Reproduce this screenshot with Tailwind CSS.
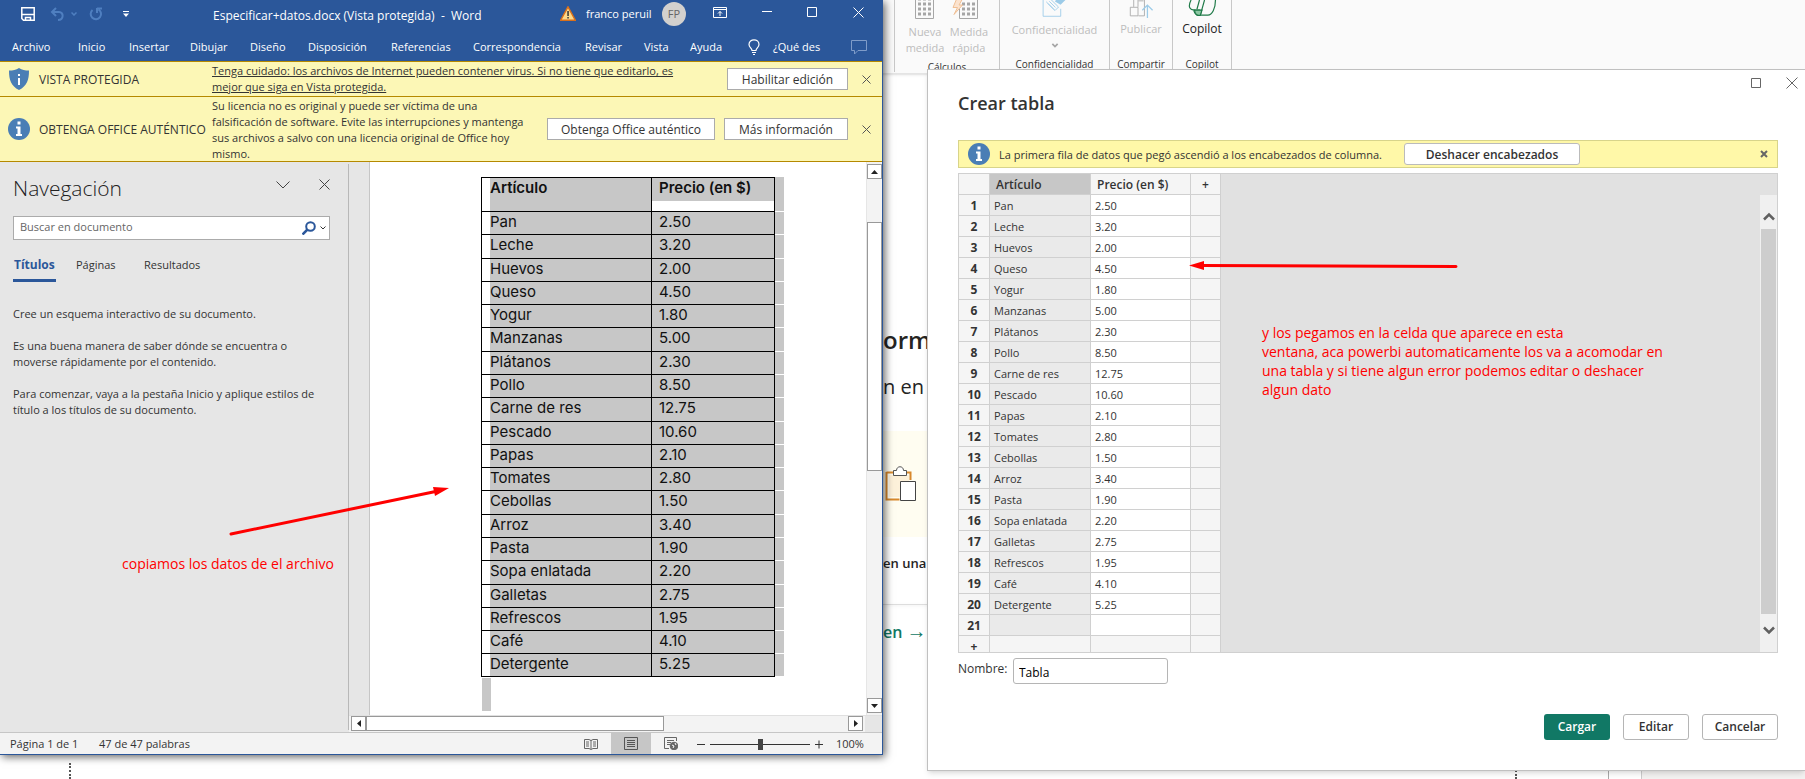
<!DOCTYPE html>
<html lang="es">
<head>
<meta charset="utf-8">
<title>Crear tabla</title>
<script src="https://cdn.jsdelivr.net/npm/@tailwindcss/browser@4"></script>
</head>
<body class="relative h-screen overflow-hidden bg-white font-['Open_Sans','Noto_Sans',sans-serif] text-[11px] leading-4 text-[#333]">

<!-- Power BI, behind both windows -->
<div class="flex h-full flex-col">
  <header class="flex h-[74px] shrink-0 border-b border-[#e4e4e4] bg-[#fafafa] pl-[894px] shadow-sm">
    <div class="grid h-[72px] w-[106px] grid-cols-2 content-start justify-items-center border-l border-r border-[#c8c8c8] px-[8px] text-center text-[#bdbdbd]">
      <svg class="h-[19px] w-5" viewBox="0 0 20 19" fill="none" stroke="#a6a6a6"><path d="M.5 0v18.500h18V0"/><path d="M3 -1h13M3 4h13M3 9h13M3 14h13" stroke-width="3" stroke-dasharray="3 2"/></svg>
      <svg class="mr-2 h-[19px] w-7" viewBox="0 0 28 19" fill="none" stroke="#a6a6a6"><path d="M8.500 9v9.500h18V0"/><path d="M11 4h13M11 9h13M11 14h13" stroke-width="3" stroke-dasharray="3 2"/><path d="M6 -2 2 7.500h4.500L3 14.500l8.500-9.500H8l4-7z" fill="#fbe3cf" stroke="#f0bf94"/></svg>
      <span class="mt-[5px]">Nueva<br>medida</span><span class="mt-[5px]">Medida<br>rápida</span>
      <span class="col-span-2 mt-[3px] text-[10px] text-[#333]">Cálculos</span>
    </div>
    <div class="flex h-[72px] w-[110px] flex-col items-center border-r border-[#c8c8c8] text-[#bdbdbd]">
      <svg class="h-[19px] w-7" viewBox="0 0 28 19" fill="none" stroke="#9ccbe8"><path d="M.5 0v18.500h20V10"/><path d="m4 2 10 10 4-4L8-2M7.500 1.500l7 7M6 4l7 7"/><path d="m15 0 5 3 6-6" stroke-width="4"/></svg>
      <span class="mt-[5px]">Confidencialidad</span>
      <svg class="mt-[5px] h-[6px] w-2" viewBox="0 0 8 6" fill="none" stroke="#a6a6a6" stroke-width="2"><path d="m1 1 3 3 3-3"/></svg>
      <span class="mt-[8px] text-[10px] text-[#333]">Confidencialidad</span>
    </div>
    <div class="flex h-[72px] w-[63px] flex-col items-center border-r border-[#c8c8c8] text-[#bdbdbd]">
      <svg class="h-[21px] w-7" viewBox="0 0 28 21" fill="none" stroke="#a6a6a6"><path d="M1.500 8.500h9v10h-9zM5.500 8V0m5 8V0M11 18.500h7V0M11 1h6"/><path d="M21.500 21V6m-6 6 6-6 6 6" stroke="#9ccbe8" stroke-width="1.500"/></svg>
      <span class="mt-[3px]">Publicar</span>
      <span class="mt-[19px] text-[10px] text-[#333]">Compartir</span>
    </div>
    <div class="flex h-[72px] w-[59px] flex-col items-center border-r border-[#c8c8c8] text-[12px] text-[#222]">
      <svg class="h-[19px] w-8" viewBox="0 0 32 19" fill="none" stroke="#1f7a48" stroke-width="1.400"><path d="M3 0C-1 8 1 12 8 12h4M19 0l-5 18c-3 1-6 0-8-6h8"/><path d="M7 12h9l-2 6c-4 1-6-1-7-6z" fill="#8cc7a3"/><path d="M14 18h9c5 0 9-8 9-18M13 0l-3 11"/></svg>
      <span class="mt-[5px]">Copilot</span>
      <span class="mt-[19px] text-[10px] text-[#333]">Copilot</span>
    </div>
  </header>
  <main class="flex flex-1 flex-col pl-[883px] text-[#252423]">
    <p class="mt-[250px] text-[24px] leading-8 font-semibold">orm</p>
    <p class="mt-[15px] text-[20px] leading-8">n en</p>
    <div class="mt-[28px] flex h-[106px] w-[120px] items-center bg-[#fffdf1] pl-[2px]">
      <svg class="h-9 w-8" viewBox="0 0 32 36" fill="none"><path d="M1.500 6.500h7m13 0h4V14M1.500 6v27.500h13" stroke="#d8882c" stroke-width="2"/><path d="M4 9h20v22H4z" fill="#fdf1da"/><path d="M8.500 9.500v-5h3c0-5 7-5 7 0h3v5z" fill="#fff" stroke="#555"/><path d="M15.500 15.500h15v19h-15z" fill="#fff" stroke="#444"/></svg>
    </div>
    <p class="mt-[16px] text-[13px] leading-5 font-semibold">en una</p>
    <div class="mt-[31px] w-[120px] border-b border-[#ddd] shadow"></div>
    <p class="mt-[14px] text-[16px] leading-6 font-semibold text-[#117865]">en <span class="text-[20px]">→</span></p>
  </main>
  <footer class="flex h-4 shrink-0 pl-[69px]">
    <div class="w-[1446px] border-l-2 border-dotted border-[#555]"></div>
    <div class="w-[93px] border-l-2 border-dotted border-[#555]"></div>
    <div class="w-[33px] border-l border-[#aaa]"></div>
    <div class="flex-1 border-l border-[#ccc] bg-[#f3f2f1]"></div>
  </footer>
</div>

<!-- Power BI dialog -->
<section class="absolute top-[69px] right-0 bottom-[8px] left-[927px] flex flex-col border-t border-b border-l border-[#c0c0c0] bg-white pr-[27px] pl-[30px] shadow-md">
  <div class="mr-[-27px] flex justify-end gap-6 pt-[7px] pr-[7px]">
    <button aria-label="Maximizar"><svg class="h-3 w-3" viewBox="0 0 12 12" fill="none" stroke="#666"><path d="M1.500 1.500h9v9h-9z"/></svg></button>
    <button aria-label="Cerrar"><svg class="h-3 w-3" viewBox="0 0 12 12" fill="none" stroke="#666"><path d="m.5.5 11 11m0-11-11 11"/></svg></button>
  </div>
  <h1 class="mt-[2px] text-[18px] leading-6 font-semibold text-[#333]">Crear tabla</h1>
  <div class="mt-[25px] flex h-7 shrink-0 items-center border border-[#d8d48a] bg-[#fff8a8] pr-[9px] pl-[9px]">
    <svg class="h-[22px] w-[22px]" viewBox="0 0 22 22"><circle cx="11" cy="11" r="11" fill="#4a7eb5"/><path d="M9.500 3.500h3v3h-3zM8 8.500h4.500V16H14v2H8v-2h1.500v-5.500H8z" fill="#fff"/></svg>
    <span class="ml-[9px] w-[405px] pt-[2px] whitespace-nowrap">La primera fila de datos que pegó ascendió a los encabezados de columna.</span>
    <button class="h-[22px] w-[176px] rounded-[3px] border border-[#bbb] bg-white pt-px text-[12px] leading-4 font-semibold text-[#333]">Deshacer encabezados</button>
    <button aria-label="Descartar" class="ml-auto"><svg class="h-2 w-2" viewBox="0 0 8 8" stroke="#666" stroke-width="2"><path d="m1 1 6 6m0-6L1 7"/></svg></button>
  </div>
  <div class="mt-[5px] flex h-[480px] shrink-0 overflow-hidden border border-[#d0d0d0] bg-[#e1e1e1]">
    <table class="h-fit w-[262px] table-fixed border-separate border-spacing-0">
      <colgroup><col class="w-[31px]"><col class="w-[101px]"><col class="w-[100px]"><col class="w-[30px]"></colgroup>
      <thead><tr class="h-[21px]">
        <th class="border-r border-b border-[#d0d0d0] bg-[#f5f5f5] p-0"></th>
        <th class="border-r border-b border-[#d0d0d0] bg-[#c7c7c7] p-0 pt-[2px] pl-[6px] text-left text-[12px] font-semibold">Artículo</th>
        <th class="border-r border-b border-[#d0d0d0] bg-[#f5f5f5] p-0 pt-[2px] pl-[6px] text-left text-[12px] font-semibold">Precio (en $)</th>
        <th class="border-r border-b border-[#d0d0d0] bg-[#f5f5f5] p-0 pt-[2px] text-[12px] font-semibold">+</th>
      </tr></thead>
      <tbody id="grid"></tbody>
    </table>
    <div class="mt-[21px] ml-auto flex w-[17px] flex-col items-center bg-[#f0f0f0]">
      <svg class="mt-[17px] h-[9px] w-3" viewBox="0 0 12 9" fill="none" stroke="#606060" stroke-width="2.500"><path d="m1 7.500 5-5 5 5"/></svg>
      <div class="mt-[8px] w-[15px] flex-1 bg-[#cdcdcd]"></div>
      <svg class="mt-[12px] mb-[17px] h-[9px] w-3" viewBox="0 0 12 9" fill="none" stroke="#606060" stroke-width="2.500"><path d="m1 1.500 5 5 5-5"/></svg>
    </div>
  </div>
  <div class="mt-[5px] flex text-[12px]">
    <label for="nombre" class="mt-[3px] w-[55px]">Nombre:</label>
    <input id="nombre" value="Tabla" class="h-[26px] w-[155px] rounded-[3px] border border-[#b5b5b5] px-[5px] pt-[2px] text-[12px] text-black">
  </div>
  <div class="mt-[30px] flex justify-end gap-[13px] text-[12px] font-semibold text-[#333]">
    <button class="h-[26px] w-[66px] rounded-[3px] bg-[#117865] text-white">Cargar</button>
    <button class="h-[26px] w-[66px] rounded-[3px] border border-[#b5b5b5] bg-white">Editar</button>
    <button class="h-[26px] w-[76px] rounded-[3px] border border-[#b5b5b5] bg-white">Cancelar</button>
  </div>
</section>

<!-- Word window -->
<section class="absolute top-0 bottom-6 left-0 flex w-[883px] flex-col border-r border-b border-[#2b579a] bg-[#e6e6e6] shadow-[2px_2px_8px_rgba(0,0,0,0.6)]">
  <header class="h-[61px] shrink-0 bg-[#2b579a] text-white">
    <div class="flex h-8 items-start">
      <div class="flex w-[213px] items-center pt-[7px] pl-[21px]">
        <button aria-label="Guardar"><svg class="h-[14px] w-[14px]" viewBox="0 0 14 14" fill="none" stroke="#fff" stroke-width="1.500"><path d="M.8.800h12.400v12.400H2.500L.8 11.500zM.8 7.500h12.400M4.500 13.500v-3h5v3"/></svg></button>
        <button aria-label="Deshacer" class="ml-[15px]"><svg class="h-[14px] w-[14px]" viewBox="0 0 14 14" fill="none" stroke="#4f7fc0" stroke-width="2"><path d="M6 1 2 5l4 4M2 5h7c5 0 5 8-1 8"/></svg></button>
        <svg class="ml-[7px] h-1 w-[6px]" viewBox="0 0 6 4" fill="none" stroke="#4f7fc0" stroke-width="1.500"><path d="m.5.500 2.500 2.500L5.500.500"/></svg>
        <button aria-label="Rehacer" class="ml-[12px]"><svg class="h-[14px] w-[14px]" viewBox="0 0 14 14" fill="none" stroke="#4f7fc0" stroke-width="2"><path d="M3.500 3a5.200 5.200 0 1 0 6 -.5M8 1v5M8 1.500h5"/></svg></button>
        <button aria-label="Personalizar" class="ml-[20px]"><svg class="h-[6px] w-[6px]" viewBox="0 0 6 6" fill="#fff"><path d="M0 0h6v1H0zM0 2.500h6L3 6z"/></svg></button>
      </div>
      <span class="w-[347px] pt-[8px] text-[12px] whitespace-pre">Especificar+datos.docx (Vista protegida)  -  Word</span>
      <svg class="mt-[6px] h-[15px] w-4" viewBox="0 0 16 15"><path d="M8 .8 15.300 14.200H.7z" fill="#fcd98a" stroke="#d9701b" stroke-width="1.400"/><path d="M7.300 5h1.500v5H7.300zM7.300 11h1.500v1.500H7.300z" fill="#333"/></svg>
      <span class="ml-[10px] w-[76px] pt-[6px] whitespace-nowrap">franco peruil</span>
      <span class="mt-[2px] flex h-6 w-6 items-center justify-center rounded-full bg-[#d2d0ce] text-[#666]">FP</span>
      <div class="ml-auto flex items-center gap-[35px] pt-[6px] pr-[18px]">
        <button aria-label="Opciones de la cinta"><svg class="h-[11px] w-[14px]" viewBox="0 0 14 11" fill="none" stroke="#fff"><path d="M.5.500h13v10H.5zM.5 2.500h13M7 9V4.500m-2 2 2-2 2 2"/></svg></button>
        <button aria-label="Minimizar"><svg class="h-3 w-[10px]" viewBox="0 0 10 12" stroke="#fff"><path d="M0 5.500h10"/></svg></button>
        <button aria-label="Maximizar"><svg class="h-[11px] w-[11px]" viewBox="0 0 11 11" fill="none" stroke="#fff"><path d="M.5.500h9v9h-9z"/></svg></button>
        <button aria-label="Cerrar"><svg class="h-[11px] w-[11px]" viewBox="0 0 11 11" stroke="#fff"><path d="m.5.500 10 10m0-10-10 10"/></svg></button>
      </div>
    </div>
    <nav class="grid grid-cols-[66px_51px_61px_60px_58px_83px_82px_112px_59px_46px_58px_25px_78px_20px] items-center pt-[7px] pl-[12px] whitespace-nowrap">
      <a href="#">Archivo</a><a href="#">Inicio</a><a href="#">Insertar</a><a href="#">Dibujar</a><a href="#">Diseño</a><a href="#">Disposición</a><a href="#">Referencias</a><a href="#">Correspondencia</a><a href="#">Revisar</a><a href="#">Vista</a><a href="#">Ayuda</a>
      <svg class="h-4 w-3" viewBox="0 0 12 16" fill="none" stroke="#fff" stroke-width="1.200"><path d="M4 11.500C4 9 1 8.500 1 5.500 1-.8 11-.8 11 5.500c0 3-3 3.500-3 6zM4 13.500h4M5 15.500h2"/></svg>
      <a href="#">¿Qué des</a>
      <svg class="h-[15px] w-4" viewBox="0 0 16 15" fill="none" stroke="#7f9cc9"><path d="M.5.500h15v10H7l-3.500 3.500v-3.500h-3z"/></svg>
    </nav>
  </header>

  <div class="flex h-9 shrink-0 items-center border-t border-b border-[#b58900] bg-[#fcf7b6] pr-[11px] pl-2">
    <svg class="mx-px h-[22px] w-5" viewBox="0 0 20 22"><path d="M10 0c3 2 6 2.500 10 2.500C20 12 18 18 10 22 2 18 0 12 0 2.500 4 2.500 7 2 10 0z" fill="#4a7eb5"/><path d="M9 6h2v2H9zM9 10h2v7H9z" fill="#fff"/></svg>
    <span class="ml-[9px] w-[173px] pt-px text-[12px]">VISTA PROTEGIDA</span>
    <a href="#" class="whitespace-nowrap underline">Tenga cuidado: los archivos de Internet pueden contener virus. Si no tiene que editarlo, es<br>mejor que siga en Vista protegida.</a>
    <button class="ml-auto h-[22px] w-[121px] border border-[#ababab] bg-white pt-px text-[12px]">Habilitar edición</button>
    <button aria-label="Cerrar aviso" class="ml-[14px]"><svg class="h-[9px] w-[9px]" viewBox="0 0 9 9" stroke="#555"><path d="m.5.500 8 8m0-8-8 8"/></svg></button>
  </div>
  <div class="flex h-[65px] shrink-0 items-center border-b border-[#b58900] bg-[#fcf7b6] pr-[11px] pl-2">
    <svg class="h-[22px] w-[22px]" viewBox="0 0 22 22"><circle cx="11" cy="11" r="11" fill="#4a7eb5"/><path d="M9.500 3.500h3v3h-3zM8 8.500h4.500V16H14v2H8v-2h1.500v-5.500H8z" fill="#fff"/></svg>
    <span class="ml-[9px] w-[173px] pt-px text-[12px] whitespace-nowrap">OBTENGA OFFICE AUTÉNTICO</span>
    <p class="pt-[2px] whitespace-nowrap">Su licencia no es original y puede ser víctima de una<br>falsificación de software. Evite las interrupciones y mantenga<br>sus archivos a salvo con una licencia original de Office hoy<br>mismo.</p>
    <button class="ml-auto h-[22px] w-[168px] border border-[#ababab] bg-white pt-px text-[12px]">Obtenga Office auténtico</button>
    <button class="ml-[9px] h-[22px] w-[124px] border border-[#ababab] bg-white pt-px text-[12px]">Más información</button>
    <button aria-label="Cerrar aviso" class="ml-[14px]"><svg class="h-[9px] w-[9px]" viewBox="0 0 9 9" stroke="#555"><path d="m.5.500 8 8m0-8-8 8"/></svg></button>
  </div>

  <div class="flex min-h-0 flex-1">
    <aside class="mt-[2px] mb-[2px] w-[349px] border-r border-[#b8b8b8] pr-[18px] pl-[13px]">
      <div class="flex pt-[10px]">
        <h2 class="text-[21px] leading-7 font-light text-[#222]">Navegación</h2>
        <button aria-label="Opciones del panel" class="ml-auto self-start pt-[7px]"><svg class="h-2 w-[14px]" viewBox="0 0 14 8" fill="none" stroke="#444"><path d="m.5.500 6.500 6.500L13.500.500"/></svg></button>
        <button aria-label="Cerrar panel" class="ml-[29px] self-start pt-[5px]"><svg class="h-[11px] w-[11px]" viewBox="0 0 11 11" stroke="#444"><path d="m.5.500 10 10m0-10-10 10"/></svg></button>
      </div>
      <div class="mt-[14px] flex h-6 items-center border border-[#ababab] bg-white pr-[3px] pl-[6px]">
        <input aria-label="Buscar en documento" placeholder="Buscar en documento" class="min-w-0 flex-1 pb-[3px] outline-none placeholder:text-[#666]">
        <svg class="h-[14px] w-[14px]" viewBox="0 0 14 14" fill="none" stroke="#2b579a" stroke-width="2"><circle cx="8.500" cy="5.500" r="4.300"/><path d="m5.500 8.500-5 5" stroke-width="2.500"/></svg>
        <svg class="ml-1 h-1 w-[6px]" viewBox="0 0 6 4" fill="none" stroke="#333"><path d="m.5.500 2.500 2.500L5.500.500"/></svg>
      </div>
      <div class="mt-[17px] grid grid-cols-[63px_68px_auto] items-start">
        <div class="flex"><button class="border-b-3 border-[#2b579a] px-px pb-[6px] text-[12px] font-bold text-[#2b579a]">Títulos</button></div>
        <button class="text-left">Páginas</button><button class="text-left">Resultados</button>
      </div>
      <p class="mt-[24px] whitespace-nowrap">Cree un esquema interactivo de su documento.</p>
      <p class="mt-4 whitespace-nowrap">Es una buena manera de saber dónde se encuentra o<br>moverse rápidamente por el contenido.</p>
      <p class="mt-4 whitespace-nowrap">Para comenzar, vaya a la pestaña Inicio y aplique estilos de<br>título a los títulos de su documento.</p>
    </aside>
    <div class="flex min-w-0 flex-1 flex-col">
      <div class="flex min-h-0 flex-1">
        <div class="w-[21px] border-r border-[#c6c6c6]"></div>
        <div class="flex-1 overflow-hidden bg-white pt-[15px] pl-[111px]">
          <table class="w-[303px] table-fixed border-separate border-spacing-0 font-[Inter,sans-serif] text-[15px] leading-[20px] text-[#111]">
            <colgroup><col class="w-[171px]"><col class="w-[123px]"><col class="w-[9px]"></colgroup>
            <thead><tr>
              <th class="h-[35px] border border-black p-0 pl-2 text-left align-top font-semibold"><div class="h-[33px] bg-[#c7c7c7]">Artículo</div></th>
              <th class="h-[35px] border-t border-r border-b border-black p-0 text-left align-top font-semibold"><div class="h-[23px] bg-[#c7c7c7] pl-[7px]">Precio (en $)</div></th>
              <td class="border-b border-white bg-[#c7c7c7] p-0"></td>
            </tr></thead>
            <tbody id="doc"></tbody>
          </table>
          <div class="mt-px ml-px h-[33px] w-[9px] bg-[#c7c7c7]"></div>
        </div>
        <div class="flex w-4 flex-col border-l border-[#e6e6e6] bg-[#f3f3f3] pt-[2px]">
          <button aria-label="Subir" class="flex h-[15px] w-[15px] items-center justify-center border border-[#999] bg-white"><svg class="h-1 w-[7px]" viewBox="0 0 7 4"><path d="M0 4 3.500 0 7 4z" fill="#222"/></svg></button>
          <div class="mt-[43px] h-[249px] w-[15px] border border-[#999] bg-white"></div>
          <button aria-label="Bajar" class="mt-auto mb-[2px] flex h-[15px] w-[15px] items-center justify-center border border-[#999] bg-white"><svg class="h-1 w-[7px]" viewBox="0 0 7 4"><path d="M0 0 3.500 4 7 0z" fill="#222"/></svg></button>
        </div>
      </div>
      <div class="flex h-[17px] border-t border-[#e0e0e0] bg-[#f3f3f3] pl-[2px]">
        <button aria-label="Izquierda" class="flex h-[15px] w-[15px] items-center justify-center border border-[#999] bg-white"><svg class="h-[7px] w-1" viewBox="0 0 4 7"><path d="M4 0 0 3.500 4 7z" fill="#222"/></svg></button>
        <div class="h-[15px] w-[298px] border border-[#999] bg-white"></div>
        <button aria-label="Derecha" class="ml-auto flex h-[15px] w-[15px] items-center justify-center border border-[#999] bg-white"><svg class="h-[7px] w-1" viewBox="0 0 4 7"><path d="M0 0 4 3.500 0 7z" fill="#222"/></svg></button>
        <div class="ml-[2px] w-[17px] bg-[#e6e6e6]"></div>
      </div>
    </div>
  </div>

  <footer class="flex h-[22px] shrink-0 items-center border-t border-[#c6c6c6] bg-[#f3f3f3] pl-[10px]">
    <span class="w-[89px]">Página 1 de 1</span><span>47 de 47 palabras</span>
    <div class="ml-auto flex h-full items-center">
      <svg class="h-3 w-[14px]" viewBox="0 0 14 12" fill="none" stroke="#666"><path d="M.5 1.500h4.500L7 2.500l2-1h4.500v9H9l-2 1-2-1H.5zM7 2v9M2 4h3M2 6h3M2 8h3M9 4h3M9 6h3M9 8h3"/></svg>
      <span class="ml-[13px] flex h-full w-10 items-center justify-center bg-[#c6c6c6]"><svg class="h-[13px] w-[14px]" viewBox="0 0 14 13" fill="none" stroke="#555"><path d="M.5.500h13v12H.5zM3 3.500h8M3 5.500h8M3 7.500h8M3 9.500h8"/></svg></span>
      <svg class="ml-[13px] h-[13px] w-[14px]" viewBox="0 0 14 13" fill="none" stroke="#666"><path d="M12.500 4V.500H.5v11H5M3 3.500h7M3 5.500h4M3 7.500h3"/><circle cx="10" cy="9" r="3.800" fill="#666"/><path d="m8 8 2 1-1 2m2-5 1 2" stroke="#fff"/></svg>
      <svg class="ml-[19px] h-3 w-[126px]" viewBox="0 0 126 12" fill="none" stroke="#333"><path d="M0 6.500h8M13 6.500h100M118 6.500h8M122 2.500v8"/><path d="M61 1h5v11h-5z" fill="#444" stroke="none"/></svg>
      <span class="ml-[13px] w-[46px]">100%</span>
    </div>
  </footer>
</section>

<!-- Red annotations drawn over the windows -->
<svg class="pointer-events-none absolute top-0 left-0 h-[779px] w-[1805px]" viewBox="0 0 1805 779">
  <path d="M231 534 438 491M1456 266.500 1200 265.500" stroke="#f00" stroke-width="3" stroke-linecap="round" fill="none"/>
  <path d="m449 488-14 8-2-9zM1189 265.500l15-4.500v9z" fill="#f00"/>
</svg>
<p class="absolute top-[554px] left-[122px] text-[14px] leading-[19px] whitespace-nowrap text-[#f00]">copiamos los datos de el archivo</p>
<p class="absolute top-[323px] left-[1262px] text-[14px] leading-[19px] whitespace-nowrap text-[#f00]">y los pegamos en la celda que aparece en esta<br>ventana, aca powerbi automaticamente los va a acomodar en<br>una tabla y si tiene algun error podemos editar o deshacer<br>algun dato</p>

<script>
const items = [['Pan','2.50'],['Leche','3.20'],['Huevos','2.00'],['Queso','4.50'],['Yogur','1.80'],['Manzanas','5.00'],['Plátanos','2.30'],['Pollo','8.50'],['Carne de res','12.75'],['Pescado','10.60'],['Papas','2.10'],['Tomates','2.80'],['Cebollas','1.50'],['Arroz','3.40'],['Pasta','1.90'],['Sopa enlatada','2.20'],['Galletas','2.75'],['Refrescos','1.95'],['Café','4.10'],['Detergente','5.25']];
const tall = new Set(['Leche','Manzanas','Carne de res','Cebollas','Sopa enlatada']);
document.getElementById('doc').innerHTML = items.map(([a, p]) => `<tr>
  <td class="border-r border-b border-l border-black p-0 pl-2"><div class="${tall.has(a) ? 'h-[23px]' : 'h-[22px]'} bg-[#c7c7c7]">${a}</div></td>
  <td class="border-r border-b border-black bg-[#c7c7c7] p-0 pl-[7px] align-top">${p}</td>
  <td class="border-b border-white bg-[#c7c7c7] p-0"></td></tr>`).join('');
const row = (n, a, p, c) => `<tr class="h-[21px]">
  <th class="border-r border-b border-[#d0d0d0] bg-[#f5f5f5] p-0 pt-[2px] text-[12px] font-bold">${n}</th>
  <td class="border-r border-b border-[#d0d0d0] ${c ? 'bg-[#eaeaea]' : 'bg-[#f5f5f5]'} p-0 pt-[2px] pl-[4px]">${a}</td>
  <td class="border-r border-b border-[#d0d0d0] ${c ? 'bg-white' : 'bg-[#f5f5f5]'} p-0 pt-[2px] pl-[4px]">${p}</td>
  <td class="border-r border-b border-[#d0d0d0] bg-[#f5f5f5] p-0"></td></tr>`;
document.getElementById('grid').innerHTML = items.map(([a, p], i) => row(i + 1, a, p, true)).join('') + row(21, '', '', true) + row('+', '', '', false);
</script>
</body>
</html>
